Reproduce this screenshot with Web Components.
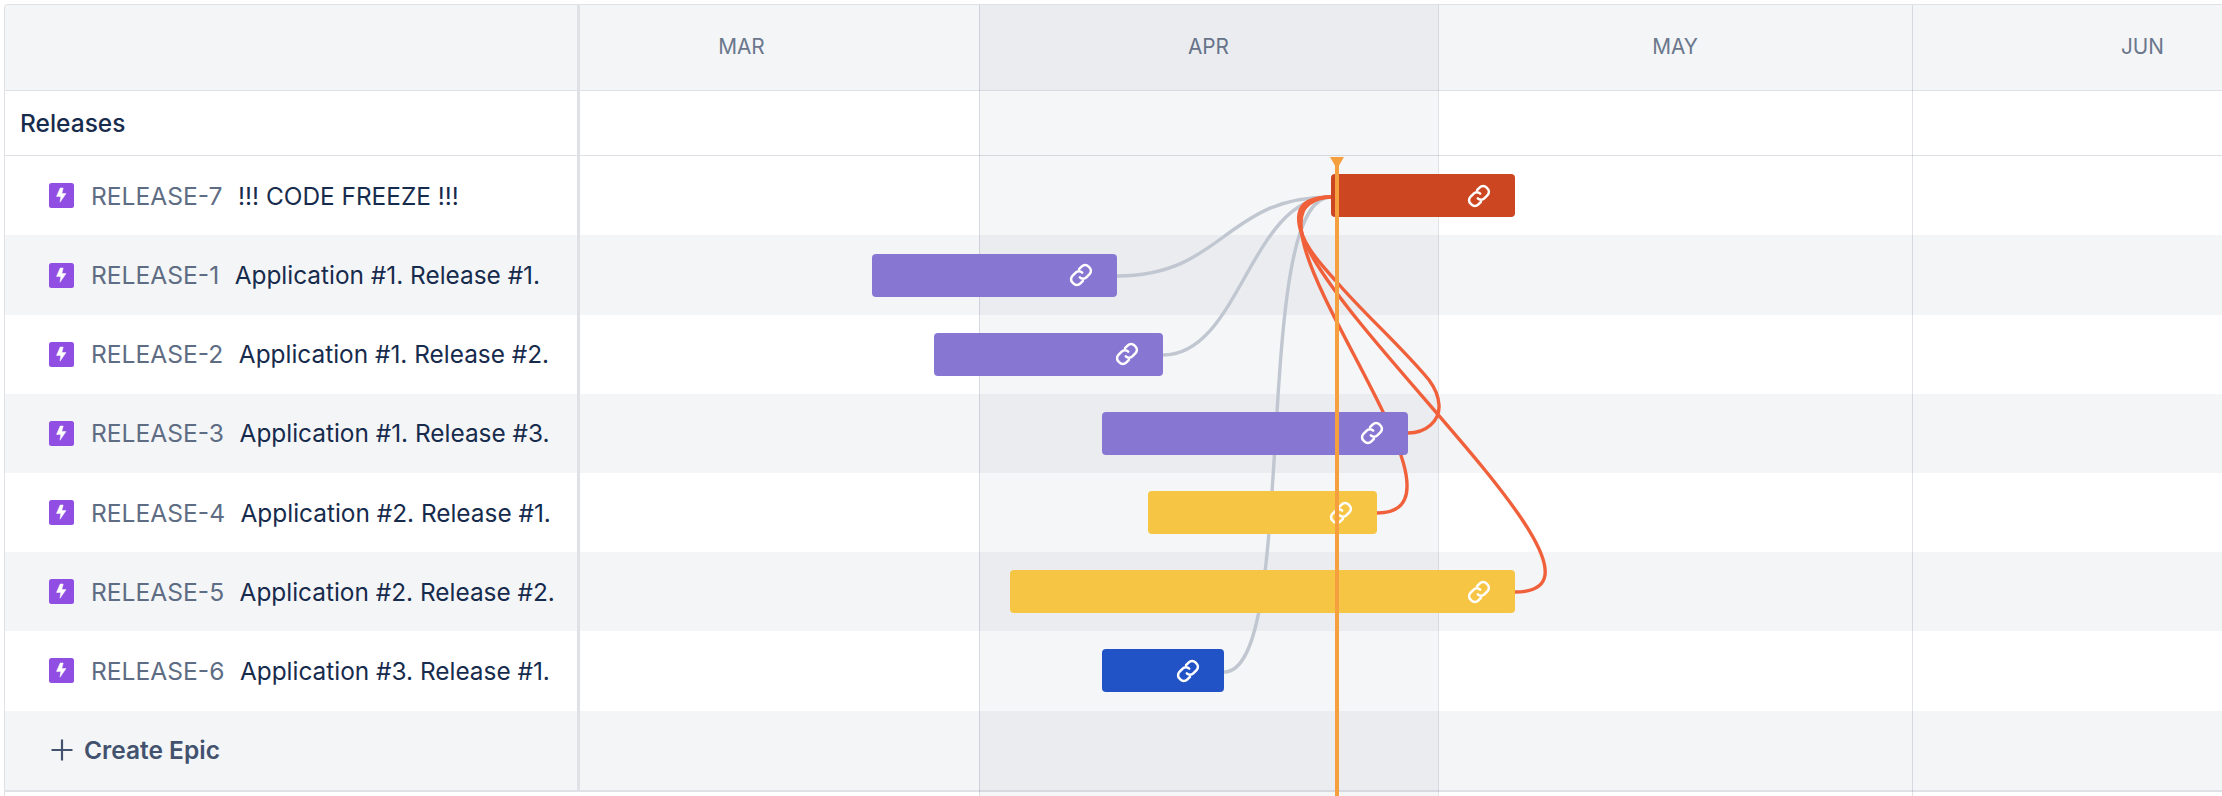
<!DOCTYPE html>
<html><head><meta charset="utf-8">
<style>
html,body{margin:0;padding:0;background:#fff;overflow:hidden}
body{font-family:Inter,"Liberation Sans",sans-serif;width:2222px;height:796px}
</style></head><body>
<road-map>
  <rm-header slot="header"></rm-header>
  <rm-section>Releases</rm-section>
  <rm-row tone="white" key="RELEASE-7" summary="!!! CODE FREEZE !!!" start="751" span="184" color="#CC4622"></rm-row>
  <rm-row tone="gray" key="RELEASE-1" summary="Application #1. Release #1." start="292" span="245" color="#8777D2"></rm-row>
  <rm-row tone="white" key="RELEASE-2" summary="Application #1. Release #2." start="354" span="229" color="#8777D2"></rm-row>
  <rm-row tone="gray" key="RELEASE-3" summary="Application #1. Release #3." start="522" span="306" color="#8777D2"></rm-row>
  <rm-row tone="white" key="RELEASE-4" summary="Application #2. Release #1." start="568" span="229" color="#F6C544"></rm-row>
  <rm-row tone="gray" key="RELEASE-5" summary="Application #2. Release #2." start="430" span="505" color="#F6C544"></rm-row>
  <rm-row tone="white" key="RELEASE-6" summary="Application #3. Release #1." start="522" span="122" color="#2152C6"></rm-row>
  <rm-create>Create Epic</rm-create>
</road-map>
<script>
const LINK=`<svg width="26" height="26" viewBox="0 0 24 24" fill="none" stroke="#fff" stroke-width="2.3" stroke-linecap="round" stroke-linejoin="round"><path d="M10.2 6.6l2.6-2.6a4.2 4.2 0 0 1 6 0l1.1 1.1a4.2 4.2 0 0 1 0 6l-3 3a4.2 4.2 0 0 1-6 0"/><path d="M13.8 17.4l-2.6 2.6a4.2 4.2 0 0 1-6 0l-1.1-1.1a4.2 4.2 0 0 1 0-6l3-3a4.2 4.2 0 0 1 6 0"/></svg>`;
function def(name,css,html){
  customElements.define(name,class extends HTMLElement{
    connectedCallback(){
      if(this.shadowRoot)return;
      const r=this.attachShadow({mode:'open'});
      r.innerHTML=`<style>${css}</style>`+(typeof html==='function'?html(this):html);
    }
  });
}
def('road-map',`
:host{display:block;position:relative;width:2222px;height:796px;overflow:hidden;box-sizing:border-box;padding:4px 0 0 4px}
.frame{border-top:1px solid #DFE1E6;border-left:1px solid #DFE1E6;border-top-left-radius:4px;overflow:hidden;height:100%;box-sizing:border-box;display:flex;flex-direction:column}
.bottom{border-top:2px solid #DFE1E6}
.tint{position:absolute;left:979px;top:5px;height:791px;width:459px;background:rgba(9,30,66,.04);z-index:1}
.sep{position:absolute;top:5px;height:791px;width:1px;background:rgba(9,30,66,.13);z-index:1}
svg.links{position:absolute;left:0;top:0;z-index:1;overflow:visible}
.today{position:absolute;left:1335px;top:157px;bottom:0;width:4px;background:#F59F3F;z-index:3}
.today::before{content:"";position:absolute;left:-5px;top:0;width:0;height:0;border-left:7px solid transparent;border-right:7px solid transparent;border-top:12px solid #F59F3F}
`,`<div class="frame"><slot name="header"></slot><slot></slot><div class="bottom"></div></div>
<div class="tint"></div>
<div class="sep" style="left:979px"></div>
<div class="sep" style="left:1438px"></div>
<div class="sep" style="left:1912px"></div>
<svg class="links" width="2222" height="796" viewBox="0 0 2222 796" fill="none" stroke-width="3.4">
 <g stroke="#C1C7D0">
  <path d="M1117 276C1224 276 1224 197 1331 197"/>
  <path d="M1163 355C1240 355 1250 197 1331 197"/>
  <path d="M1224 672C1300 672 1250 197 1331 197"/>
 </g>
 <g stroke="#F0603A">
  <path d="M1408 433C1426 433 1440 421 1439 405C1438.500 396 1435 388 1429 380C1400 345 1365 315 1335 280C1315 258 1300 240 1300 222C1300 207 1314 197 1331 197"/>
  <path d="M1377 513C1497 513 1211 197 1331 197"/>
  <path d="M1515 592C1670 592 1170 197 1331 197"/>
 </g>
</svg>
<div class="today"></div>`);
def('rm-header',`
:host{display:grid;grid-template-columns:572px 3px 399px 459px 474px 1fr;height:84.5px;background:#F4F5F7;border-bottom:1.5px solid #DFE1E6;color:#6B778C;font-size:20.8px;line-height:24px}
.d{background:#DFE1E6}
.m{display:flex;align-items:center;justify-content:center}
.mar{padding-right:76px}
.jun{justify-content:flex-start;padding-left:209px}
`,`<div></div><div class="d"></div><div class="m mar">MAR</div><div class="m">APR</div><div class="m">MAY</div><div class="m jun">JUN</div>`);
def('rm-section',`
:host{display:grid;grid-template-columns:572px 3px 1fr;height:64.75px;background:#fff;border-bottom:1px solid #DFE1E6;color:#172B4D;font-size:24.5px;font-weight:500}
.l{display:flex;align-items:center;padding-left:15px}
.d{background:#DFE1E6}
`,`<div class="l"><slot></slot></div><div class="d"></div><div></div>`);
def('rm-row',`
:host{display:grid;grid-template-columns:572px 3px 1fr;height:79.2px;font-size:24.6px}
:host([tone=gray]){background:#F4F5F7}
:host([tone=white]){background:#fff}
.l{display:flex;align-items:center;padding-left:44px;white-space:nowrap}
.d{background:#DFE1E6}
.k{color:#5E6C84;margin:0 15.5px 0 17px}
.s{color:#172B4D;font-size:24.4px}
.t{display:flex;align-items:center}
.icon{width:25px;height:25px;flex:none}
`,el=>{
 const s=+el.getAttribute('start'),w=+el.getAttribute('span'),c=el.getAttribute('color');
 return `<div class="l"><svg class="icon" viewBox="0 0 25 25"><rect width="25" height="25" rx="2.500" fill="#904EE2"/><path d="M11.2 5H14.200L12.800 10.600H17L11 19.200L11.800 13.400H7.500Z" fill="#fff" stroke="#fff" stroke-width=".5" stroke-linejoin="round"/></svg><span class="k">${el.getAttribute('key')}</span><span class="s">${el.getAttribute('summary')}</span></div><div class="d"></div><div class="t"><rm-bar style="--start:${s}px;--w:${w}px;--c:${c}"></rm-bar></div>`;
});
def('rm-bar',`
:host{display:flex;align-items:center;justify-content:flex-end;position:relative;z-index:2;margin-left:var(--start);width:var(--w);height:43px;background:var(--c);border-radius:4px;padding-right:23px;box-sizing:border-box}
svg{display:block}
`,LINK);
def('rm-create',`
:host{display:grid;grid-template-columns:572px 3px 1fr;height:79.2px;background:#F4F5F7;color:#42526E;font-size:24.5px;font-weight:600}
.l{display:flex;align-items:center;padding-left:45px;gap:10px}
.d{background:#DFE1E6}
svg{display:block}
`,`<div class="l"><svg width="24" height="24" viewBox="0 0 24 24" stroke="#42526E" stroke-width="2.2" fill="none"><path d="M12 1.500v21M1.500 12h21"/></svg><slot></slot></div><div class="d"></div><div></div>`);
</script>
</body></html>
